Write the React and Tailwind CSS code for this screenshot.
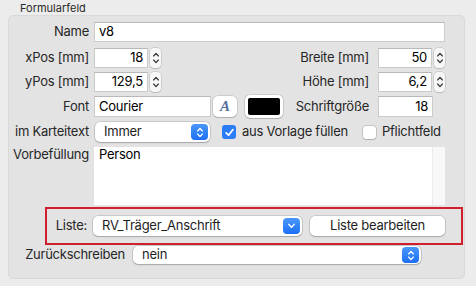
const font = { fontFamily: "Inter, 'Noto Sans', sans-serif" };

const Chevron = ({ dir = "down", className = "" }) => (
  <svg viewBox="0 0 10 6" className={className} fill="none" stroke="currentColor" strokeWidth="1.6" strokeLinecap="round" strokeLinejoin="round">
    {dir === "down" ? <path d="M2 1.2 L5 4.4 L8 1.2" /> : <path d="M2 4.8 L5 1.6 L8 4.8" />}
  </svg>
);

const Stepper = () => (
  <div className="ml-[2px] flex h-[20px] w-[11px] flex-col items-center justify-center gap-[2px] rounded-[4px] bg-[#f7f7f7] text-[#3a3a3a] shadow-[0_0_0_0.5px_rgba(0,0,0,0.18),0_1px_1px_rgba(0,0,0,0.1)]">
    <Chevron dir="up" className="h-[5px] w-[8px]" />
    <Chevron dir="down" className="h-[5px] w-[8px]" />
  </div>
);

const Field = ({ value, className = "", right }) => (
  <div className={`flex h-[20px] items-center border border-[#cbcbcb] border-t-[#b8b8b8] bg-white px-[4px] text-[13px] text-black ${right ? "justify-end" : ""} ${className}`}>
    {value}
  </div>
);

const BlueKnob = ({ single }) => (
  <div className="flex h-[16px] w-[17px] flex-col items-center justify-center gap-[1px] rounded-[4px] bg-gradient-to-b from-[#4a97fa] to-[#1b6ff5] text-white">
    {single ? (
      <Chevron dir="down" className="h-[6px] w-[9px]" />
    ) : (
      <>
        <Chevron dir="up" className="h-[5px] w-[8px]" />
        <Chevron dir="down" className="h-[5px] w-[8px]" />
      </>
    )}
  </div>
);

const Popup = ({ value, className = "", single }) => (
  <div className={`flex items-center justify-between rounded-[5px] bg-white pl-[9px] pr-[2px] text-[13px] text-[#1e1e1e] shadow-[0_0_0_0.5px_rgba(0,0,0,0.22),0_1px_1.5px_rgba(0,0,0,0.18)] ${className}`}>
    <span>{value}</span>
    <BlueKnob single={single} />
  </div>
);

const Label = ({ children, className = "" }) => (
  <div className={`shrink-0 text-right text-[13px] text-[#262626] ${className}`}>{children}</div>
);

export default function App() {
  return (
    <div className="h-[286px] w-[476px] overflow-hidden bg-[#ececec] pt-[2px] tracking-[-0.25px]" style={font}>
      <div className="h-[13px] pl-[20px] text-[11px] leading-[13px] tracking-normal text-[#2a2a2a]">Formularfeld</div>
      <div className="ml-[8px] h-[264px] w-[457px] rounded-[5px] border border-[#d9d9d9] bg-[#e3e3e3]">
        {/* Name */}
        <div className="mt-[6px] flex h-[20px] items-center">
          <Label className="w-[80px]">Name</Label>
          <Field value="v8" className="ml-[5px] w-[351px]" />
        </div>

        {/* xPos / Breite */}
        <div className="mt-[6px] flex h-[20px] items-center">
          <Label className="w-[80px]">xPos [mm]</Label>
          <Field value="18" right className="ml-[5px] w-[54px]" />
          <Stepper />
          <Label className="ml-auto">Breite [mm]</Label>
          <Field value="50" right className="ml-[9px] w-[54px]" />
          <Stepper />
          <div className="w-[19px]" />
        </div>

        {/* yPos / Höhe */}
        <div className="mt-[4px] flex h-[20px] items-center">
          <Label className="w-[80px]">yPos [mm]</Label>
          <Field value="129,5" right className="ml-[5px] w-[54px]" />
          <Stepper />
          <Label className="ml-auto">Höhe [mm]</Label>
          <Field value="6,2" right className="ml-[9px] w-[54px]" />
          <Stepper />
          <div className="w-[19px]" />
        </div>

        {/* Font */}
        <div className="mt-[4px] flex h-[21px] items-center">
          <Label className="w-[80px]">Font</Label>
          <Field value="Courier" className="ml-[5px] h-[21px] w-[117px]" />
          <div className="ml-[2px] flex h-[21px] w-[24px] items-center justify-center rounded-[5px] bg-white shadow-[0_0_0_0.5px_rgba(0,0,0,0.2),0_1px_1px_rgba(0,0,0,0.15)]">
            <span className="text-[15px] font-bold italic leading-none text-[#56709e]" style={{ fontFamily: "'Liberation Serif', serif" }}>A</span>
          </div>
          <div className="ml-[8px] flex h-[23px] w-[38px] items-center justify-center rounded-[5px] bg-white shadow-[0_0_0_0.5px_rgba(0,0,0,0.2),0_1px_1px_rgba(0,0,0,0.15)]">
            <div className="h-[17px] w-[32px] rounded-[2px] bg-black" />
          </div>
          <Label className="ml-auto">Schriftgröße</Label>
          <Field value="18" right className="ml-[9px] h-[21px] w-[55px]" />
          <div className="w-[31px]" />
        </div>

        {/* im Karteitext */}
        <div className="mt-[5px] flex h-[20px] items-center">
          <Label className="w-[80px]">im Karteitext</Label>
          <Popup value="Immer" className="ml-[6px] h-[20px] w-[115px]" />
          <div className="ml-[12px] flex h-[14px] w-[14px] items-center justify-center rounded-[3px] bg-[#2b7cf6]">
            <svg viewBox="0 0 12 12" className="h-[11px] w-[11px]" fill="none" stroke="white" strokeWidth="1.9" strokeLinecap="round" strokeLinejoin="round">
              <path d="M2.4 6.4 L5 9 L9.8 2.8" />
            </svg>
          </div>
          <span className="ml-[6px] text-[13px] text-[#262626]">aus Vorlage füllen</span>
          <div className="ml-[15px] h-[13px] w-[13px] rounded-[3px] bg-white shadow-[0_0_0_0.5px_rgba(0,0,0,0.25),0_1px_1px_rgba(0,0,0,0.12)]" />
          <span className="ml-[6px] text-[13px] text-[#262626]">Pflichtfeld</span>
        </div>

        {/* Vorbefüllung */}
        <div className="mt-[5px] flex h-[58px] items-start">
          <Label className="w-[80px] leading-[15px]">Vorbefüllung</Label>
          <div className="ml-[5px] flex h-[58px] w-[351px] bg-white">
            <div className="flex-1 pl-[5px] text-[13px] leading-[15px] text-black">Person</div>
            <div className="h-full w-[13px] border-l border-[#ececec] bg-[#f8f8f8]" />
          </div>
        </div>

        {/* Liste (highlighted) */}
        <div className="ml-[36px] mt-[2px] flex h-[38px] w-[418px] items-center border-2 border-[#d0202d]">
          <Label className="w-[40px]">Liste:</Label>
          <Popup value="RV_Träger_Anschrift" single className="ml-[6px] h-[20px] w-[209px]" />
          <div className="ml-[8px] flex h-[20px] w-[135px] items-center justify-center rounded-[5px] bg-white text-[13px] text-[#1e1e1e] shadow-[0_0_0_0.5px_rgba(0,0,0,0.22),0_1px_1.5px_rgba(0,0,0,0.18)]">
            Liste bearbeiten
          </div>
        </div>

        {/* Zurückschreiben */}
        <div className="mt-[1px] flex h-[18px] items-center">
          <Label className="w-[116px]">Zurückschreiben</Label>
          <Popup value="nein" className="ml-[8px] h-[18px] w-[288px]" />
        </div>
      </div>
    </div>
  );
}
